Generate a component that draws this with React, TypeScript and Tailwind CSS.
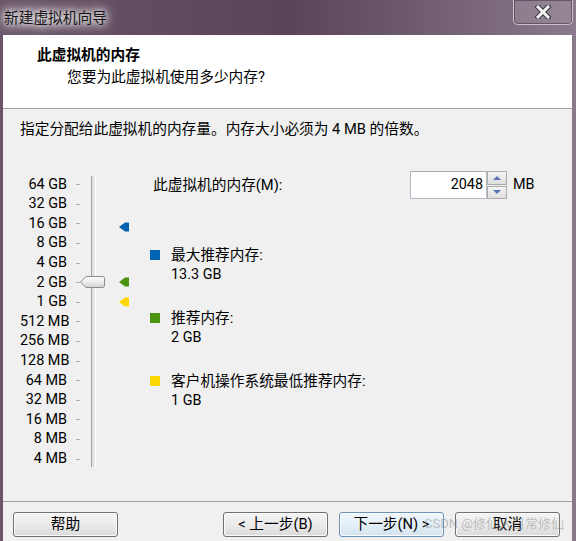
import React from "react";

const SCALE = [
  "64 GB", "32 GB", "16 GB", "8 GB", "4 GB", "2 GB", "1 GB",
  "512 MB", "256 MB", "128 MB", "64 MB", "32 MB", "16 MB", "8 MB", "4 MB",
];

const LEGEND = [
  { color: "bg-[#0063b1]", label: "最大推荐内存:", value: "13.3 GB" },
  { color: "bg-[#4a9410]", label: "推荐内存:", value: "2 GB" },
  { color: "bg-[#ffd800]", label: "客户机操作系统最低推荐内存:", value: "1 GB" },
];

function Marker({ fill, top }: { fill: string; top: string }) {
  return (
    <svg className={`absolute left-0 ${top}`} width="10" height="10" viewBox="0 0 10 10">
      <polygon points="0,5 6,0.5 10,0.5 10,9.5 6,9.5" fill={fill} />
    </svg>
  );
}

function Button({ children, primary }: { children: React.ReactNode; primary?: boolean }) {
  return (
    <div
      className={
        "w-[105px] h-[25px] rounded-[3px] border flex items-center justify-center leading-none shadow-[inset_0_0_0_1px_#fbfbfb] " +
        (primary
          ? "border-[#6b93b8] bg-linear-to-b from-[#f1f7fb] via-[#e4eff7] to-[#d3e3ef]"
          : "border-[#707070] bg-linear-to-b from-[#f4f4f4] via-[#ebebeb] to-[#dadada]")
      }
    >
      {children}
    </div>
  );
}

export default function App() {
  return (
    <div className="relative w-[576px] h-[541px] flex flex-col overflow-hidden bg-linear-to-r from-[#6a5668] via-[#5a4458] to-[#8a7a8b] [font-family:Roboto,'Noto_Sans_CJK_SC',sans-serif] text-[14.7px] text-black">
      {/* title bar */}
      <div className="h-[35px] shrink-0 flex items-start">
        <div className="pl-[4px] pt-[8px] leading-[20px] text-[#151515] [text-shadow:0_0_6px_#fff,0_0_10px_#fff,0_0_16px_#fff]">
          新建虚拟机向导
        </div>
        <div className="ml-auto mr-[3px] w-[60px] h-[25px] rounded-b-[5px] border border-t-0 border-[#cbbfca] bg-white/10 shadow-[inset_0_0_0_1px_rgba(60,40,60,0.5)] flex items-center justify-center">
          <svg width="18" height="14" viewBox="0 0 18 14">
            <path d="M4 2 L14 12 M14 2 L4 12" stroke="#3a3440" strokeWidth="5" strokeLinecap="square" />
            <path d="M4 2 L14 12 M14 2 L4 12" stroke="#f4f4f4" strokeWidth="3" strokeLinecap="square" />
          </svg>
        </div>
      </div>

      {/* client area */}
      <div className="flex-1 flex flex-col ml-[3px] mr-[4px] bg-[#f0f0f0]">
        {/* header */}
        <div className="h-[74px] shrink-0 bg-white border-b border-[#a0a0a0]">
          <div className="pl-[34px] pt-[9px] leading-[22px] font-bold">此虚拟机的内存</div>
          <div className="pl-[64px] leading-[22px]">您要为此虚拟机使用多少内存?</div>
        </div>

        {/* body */}
        <div className="flex-1 pl-[17px] pt-[10px]">
          <div className="leading-[20px]">指定分配给此虚拟机的内存量。内存大小必须为 4 MB 的倍数。</div>

          <div className="mt-[32px] flex">
            {/* slider */}
            <div className="flex pt-[4px]">
              <div className="flex flex-col">
                {SCALE.map((s) => (
                  <div key={s} className="h-[19.6px] flex items-center">
                    <div className="w-[47px] text-right text-[14.4px] leading-none whitespace-nowrap">{s}</div>
                    <div className="ml-[9px] w-[4px] h-px bg-[#b0b0b0]" />
                  </div>
                ))}
              </div>
              <div className="relative ml-[11px] mt-[1px] w-[5px] h-[291px] border-l border-[#a0a0a0] border-r border-r-white bg-[#e4e4e4]">
                <svg className="absolute left-[-12px] top-[100px]" width="25" height="12" viewBox="0 0 25 12">
                  <defs>
                    <linearGradient id="thumb" x1="0" y1="0" x2="0" y2="1">
                      <stop offset="0" stopColor="#ffffff" />
                      <stop offset="0.5" stopColor="#ececec" />
                      <stop offset="1" stopColor="#d2d2d2" />
                    </linearGradient>
                  </defs>
                  <path d="M0.5 6 L6 0.5 H22.5 Q24.5 0.5 24.5 2.5 V9.5 Q24.5 11.5 22.5 11.5 H6 Z" fill="url(#thumb)" stroke="#8b8b8b" />
                </svg>
              </div>
              <div className="relative ml-[23px] w-[10px]">
                <Marker fill="#0063b1" top="top-[47px]" />
                <Marker fill="#4a9410" top="top-[102px]" />
                <Marker fill="#ffd800" top="top-[122px]" />
              </div>
            </div>

            {/* right side */}
            <div className="ml-[21px] flex flex-col">
              <div className="h-[28px] flex items-center">
                <div className="pl-[3px] w-[260px] whitespace-nowrap">此虚拟机的内存(M):</div>
                <div className="w-[77px] h-[28px] bg-white border border-[#b5bcc7] border-t-[#abadb3] flex items-center justify-end pr-[3px] text-[14.4px]">
                  2048
                </div>
                <div className="w-[20px] h-[28px] flex flex-col gap-px">
                  <div className="flex-1 border border-[#acacac] bg-linear-to-b from-[#f5f5f5] to-[#dedede] flex items-center justify-center">
                    <svg width="8" height="4" viewBox="0 0 8 4"><polygon points="0,4 4,0 8,4" fill="#5a72b8" /></svg>
                  </div>
                  <div className="flex-1 border border-[#acacac] bg-linear-to-b from-[#f5f5f5] to-[#dedede] flex items-center justify-center">
                    <svg width="8" height="4" viewBox="0 0 8 4"><polygon points="0,0 8,0 4,4" fill="#5a72b8" /></svg>
                  </div>
                </div>
                <div className="ml-[6px] text-[14.4px]">MB</div>
              </div>

              <div className="mt-[46px] flex flex-col gap-[23px]">
                {LEGEND.map((l) => (
                  <div key={l.label} className="flex">
                    <div className={`mt-[5px] w-[10px] h-[10px] ${l.color}`} />
                    <div className="ml-[11px] leading-[20px]">
                      <div className="whitespace-nowrap">{l.label}</div>
                      <div className="text-[14.4px]">{l.value}</div>
                    </div>
                  </div>
                ))}
              </div>
            </div>
          </div>
        </div>

        <div className="h-px shrink-0 bg-[#a0a0a0]" />

        {/* footer */}
        <div className="h-[39px] shrink-0 flex items-start pt-[10px]">
          <div className="ml-[10px]">
            <Button>帮助</Button>
          </div>
          <div className="ml-auto flex gap-[11px] mr-[12px]">
            <Button>&lt; 上一步(B)</Button>
            <Button primary>下一步(N) &gt;</Button>
            <Button>取消</Button>
          </div>
        </div>
      </div>

      {/* watermark */}
      <div className="absolute left-[424px] top-[515px] text-[13px] leading-[18px] text-[#8a8a8a]/50 whitespace-nowrap pointer-events-none">
        CSDN @修仙人日常修仙
      </div>
    </div>
  );
}
